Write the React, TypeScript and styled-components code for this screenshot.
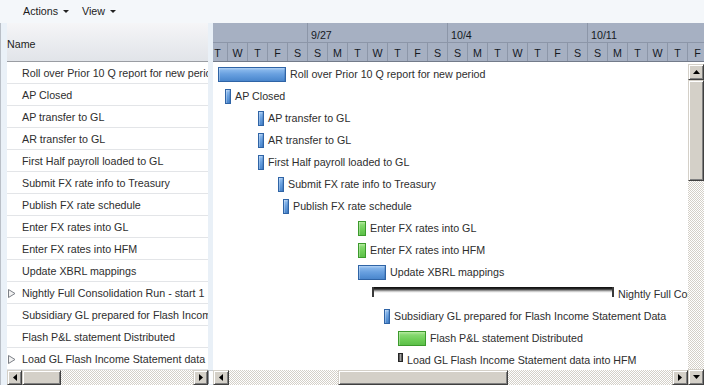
import React from 'react'
import styled, { createGlobalStyle, css } from 'styled-components'

const GlobalStyle = createGlobalStyle`
  html, body {
    margin: 0;
    padding: 0;
  }
  body {
    font-family: 'Liberation Sans', Arial, sans-serif;
    font-size: 10.7px;
    color: #2e2e2e;
  }
`

type Kind = 'blue' | 'green' | 'dark' | 'summary'

interface Task {
  name: string
  kind: Kind
  start: number
  end: number
  expandable?: boolean
}

// x positions of the bars on the page; the chart pane starts at CHART_X
const CHART_X = 213
const DAY_W = 20
const FIRST_DAY_X = 208

const tasks: Task[] = [
  { name: 'Roll over Prior 10 Q report for new period', kind: 'blue', start: 218, end: 286 },
  { name: 'AP Closed', kind: 'blue', start: 225, end: 231 },
  { name: 'AP transfer to GL', kind: 'blue', start: 258, end: 264 },
  { name: 'AR transfer to GL', kind: 'blue', start: 258, end: 264 },
  { name: 'First Half payroll loaded to GL', kind: 'blue', start: 258, end: 264 },
  { name: 'Submit FX rate info to Treasury', kind: 'blue', start: 278, end: 284 },
  { name: 'Publish FX rate schedule', kind: 'blue', start: 283, end: 289 },
  { name: 'Enter FX rates into GL', kind: 'green', start: 358, end: 366 },
  { name: 'Enter FX rates into HFM', kind: 'green', start: 358, end: 366 },
  { name: 'Update XBRL mappings', kind: 'blue', start: 358, end: 386 },
  { name: 'Nightly Full Consolidation Run - start 1', kind: 'summary', start: 372, end: 614, expandable: true },
  { name: 'Subsidiary GL prepared for Flash Income Statement Data', kind: 'blue', start: 384, end: 390 },
  { name: 'Flash P&L statement Distributed', kind: 'green', start: 398, end: 426 },
  { name: 'Load GL Flash Income Statement data into HFM', kind: 'dark', start: 398, end: 403, expandable: true },
]

const weeks = [
  { label: '', days: 5 },
  { label: '9/27', days: 7 },
  { label: '10/4', days: 7 },
  { label: '10/11', days: 7 },
]

const dayLetters = ['T', 'W', 'T', 'F', 'S', 'S', 'M', 'T', 'W', 'T', 'F', 'S', 'S', 'M', 'T', 'W', 'T', 'F', 'S', 'S', 'M', 'T', 'W', 'T', 'F']

const Page = styled.div`
  width: 704px;
  height: 385px;
  overflow: hidden;
  display: flex;
  flex-direction: column;
  background: #f4f7fa;
`

const Toolbar = styled.div`
  height: 23px;
  flex: none;
  display: flex;
  align-items: center;
  padding-left: 23px;
  color: #1c1c1c;
`

const MenuItem = styled.div`
  display: flex;
  align-items: center;
  gap: 5px;
  margin-right: 13px;
  padding-bottom: 1px;
`

const Main = styled.div`
  flex: 1;
  display: flex;
  min-height: 0;
  border-left: 1px solid #b9bfc7;
`

const Gutter = styled.div`
  width: 6px;
  flex: none;
  background: #eaf1f8;
`

const ListPane = styled.div`
  width: 201px;
  flex: none;
  display: flex;
  flex-direction: column;
`

const NameHeader = styled.div`
  height: 39px;
  flex: none;
  box-sizing: border-box;
  display: flex;
  align-items: center;
  padding: 4px 0 0 0;
  background: linear-gradient(to bottom, #f5f5f7, #e1e4e9);
  border-bottom: 1px solid #9a9da3;
  color: #1c1c1c;
`

const ListBody = styled.div`
  flex: 1;
  background: #fff;
  overflow: hidden;
`

const ListRow = styled.div`
  height: 22px;
  box-sizing: border-box;
  display: flex;
  align-items: center;
  padding: 1px 0 0 1px;
  border-bottom: 1px solid #e3e5e8;
  white-space: nowrap;
  overflow: hidden;
`

const ExpandSlot = styled.span`
  width: 14px;
  flex: none;
  display: flex;
  align-items: center;
`

const Splitter = styled.div`
  width: 5px;
  flex: none;
  display: flex;
  flex-direction: column;
  justify-content: flex-end;
  background: #e9f0f7;
`

const SplitterGrip = styled.div`
  height: 14px;
  margin: 0 0 1px 0;
  box-sizing: border-box;
  background: #fbfcfe;
  border-left: 1px solid #8d9298;
  border-top: 1px solid #c5cad0;
`

const ChartPane = styled.div`
  flex: 1;
  min-width: 0;
  display: flex;
  flex-direction: column;
`

const TimeHeader = styled.div`
  height: 39px;
  flex: none;
  overflow: hidden;
  background: #a6b0c2;
  color: #15191f;
`

const TimeRow = styled.div<{ $h: number; $edge: string }>`
  height: ${(p) => p.$h}px;
  box-sizing: border-box;
  display: flex;
  margin-left: ${FIRST_DAY_X - CHART_X}px;
  border-bottom: 1px solid ${(p) => p.$edge};
`

const WeekCell = styled.div<{ $days: number }>`
  width: ${(p) => p.$days * DAY_W}px;
  flex: none;
  box-sizing: border-box;
  border-right: 1px solid #8c96a8;
  padding: 6px 0 0 3px;
`

const DayCell = styled.div`
  width: ${DAY_W}px;
  flex: none;
  box-sizing: border-box;
  border-right: 1px solid #8c96a8;
  text-align: center;
  line-height: 18px;
  padding-top: 1px;
`

const ChartMain = styled.div`
  flex: 1;
  min-height: 0;
  display: flex;
`

const ChartColumn = styled.div`
  flex: 1;
  min-width: 0;
  display: flex;
  flex-direction: column;
`

const ChartBody = styled.div`
  flex: 1;
  background: #fff;
  overflow: hidden;
`

const ChartRow = styled.div`
  height: 22px;
  box-sizing: border-box;
  padding-top: 5px;
  display: flex;
  align-items: flex-start;
  white-space: nowrap;
`

const skins: Record<Kind, ReturnType<typeof css>> = {
  blue: css`
    height: 15px;
    border: 1px solid #2f64a6;
    background: linear-gradient(to bottom, #b2d2f5 0%, #84b4ea 18%, #6aa1e0 45%, #5b95d8 70%, #4a86cc 100%);
    box-shadow: inset 1px 0 rgba(255, 255, 255, 0.3), inset -1px 0 rgba(0, 40, 100, 0.15);
  `,
  green: css`
    height: 15px;
    border: 1px solid #3c9a2c;
    background: linear-gradient(to bottom, #b6eaa0 0%, #86d970 22%, #70cf59 55%, #5cbf48 100%);
    box-shadow: inset 1px 0 rgba(255, 255, 255, 0.3);
  `,
  dark: css`
    height: 9px;
    border: 1px solid #262626;
    background: linear-gradient(to right, #3e3e3e, #a3a3a3 50%, #3e3e3e);
  `,
  summary: css`
    position: relative;
    height: 10px;
    background: linear-gradient(
      to bottom,
      #0c0c0c 0,
      #2a2a2a 2px,
      #6e6e6e 3px,
      #b4b4b4 4px,
      #e6e6e6 5px,
      transparent 6px
    );
    &::before,
    &::after {
      content: '';
      position: absolute;
      top: 0;
      width: 2px;
      height: 10px;
      background: #3a3a3a;
    }
    &::before {
      left: 0;
    }
    &::after {
      right: 0;
    }
  `,
}

const Bar = styled.div<{ $kind: Kind }>`
  flex: none;
  box-sizing: border-box;
  ${(p) => skins[p.$kind]}
`

const BarLabel = styled.span`
  margin-left: 4px;
  line-height: 15px;
`

/* classic scrollbars */
const raised = css`
  box-sizing: border-box;
  background: #d4d0c8;
  border: 1px solid;
  border-color: #d4d0c8 #404040 #404040 #d4d0c8;
  box-shadow: inset 1px 1px #ffffff, inset -1px -1px #808080;
`

const ScrollButton = styled.div<{ $w: number; $h: number }>`
  ${raised};
  width: ${(p) => p.$w}px;
  height: ${(p) => p.$h}px;
  flex: none;
  display: flex;
  align-items: center;
  justify-content: center;
`

const Thumb = styled.div<{ $w?: number; $h?: number }>`
  ${raised};
  flex: none;
  width: ${(p) => (p.$w ? `${p.$w}px` : 'auto')};
  height: ${(p) => (p.$h ? `${p.$h}px` : 'auto')};
`

const Track = styled.div<{ $size?: number }>`
  flex: ${(p) => (p.$size ? `0 0 ${p.$size}px` : '1')};
  background: repeating-conic-gradient(#d4d0c8 0 25%, #ffffff 0 50%) 0 0 / 2px 2px;
`

const HScroll = styled.div`
  height: 15px;
  flex: none;
  display: flex;
`

const VScroll = styled.div`
  width: 16px;
  flex: none;
  display: flex;
  flex-direction: column;
  padding-top: 2px;
  background: #fff;
`

const Arrow = ({ dir }: { dir: 'up' | 'down' | 'left' | 'right' }) => {
  const pts = {
    up: '0,4 7,4 3.5,0',
    down: '0,0 7,0 3.5,4',
    left: '4,0 4,7 0,3.5',
    right: '0,0 0,7 4,3.5',
  }[dir]
  const vertical = dir === 'up' || dir === 'down'
  return (
    <svg width={vertical ? 7 : 4} height={vertical ? 4 : 7} viewBox={vertical ? '0 0 7 4' : '0 0 4 7'}>
      <polygon points={pts} fill="#000" />
    </svg>
  )
}

const Caret = () => (
  <svg width="6" height="3" viewBox="0 0 6 3">
    <polygon points="0,0 6,0 3,3" fill="#222" />
  </svg>
)

const ExpandIcon = () => (
  <svg width="8" height="9" viewBox="0 0 8 9">
    <polygon points="0.5,0.5 7,4.5 0.5,8.5" fill="#f2f2f2" stroke="#7b7f86" strokeWidth="1" />
  </svg>
)

export default function App() {
  return (
    <>
      <GlobalStyle />
      <Page>
        <Toolbar>
          <MenuItem>
            Actions <Caret />
          </MenuItem>
          <MenuItem>
            View <Caret />
          </MenuItem>
        </Toolbar>
        <Main>
          <Gutter />
          <ListPane>
            <NameHeader>Name</NameHeader>
            <ListBody>
              {tasks.map((t) => (
                <ListRow key={t.name}>
                  <ExpandSlot>{t.expandable && <ExpandIcon />}</ExpandSlot>
                  {t.name}
                </ListRow>
              ))}
            </ListBody>
            <HScroll>
              <ScrollButton $w={15} $h={15}>
                <Arrow dir="left" />
              </ScrollButton>
              <Thumb $w={39} />
              <Track />
              <ScrollButton $w={15} $h={15}>
                <Arrow dir="right" />
              </ScrollButton>
            </HScroll>
          </ListPane>
          <Splitter>
            <SplitterGrip />
          </Splitter>
          <ChartPane>
            <TimeHeader>
              <TimeRow $h={20} $edge="#8c96a8">
                {weeks.map((w, i) => (
                  <WeekCell key={i} $days={w.days}>
                    {w.label}
                  </WeekCell>
                ))}
              </TimeRow>
              <TimeRow $h={19} $edge="#737b8a">
                {dayLetters.map((d, i) => (
                  <DayCell key={i}>{d}</DayCell>
                ))}
              </TimeRow>
            </TimeHeader>
            <ChartMain>
              <ChartColumn>
                <ChartBody>
                  {tasks.map((t) => (
                    <ChartRow key={t.name}>
                      <Bar $kind={t.kind} style={{ marginLeft: t.start - CHART_X, width: t.end - t.start }} />
                      <BarLabel>{t.name}</BarLabel>
                    </ChartRow>
                  ))}
                </ChartBody>
                <HScroll>
                  <ScrollButton $w={16} $h={15}>
                    <Arrow dir="left" />
                  </ScrollButton>
                  <Track $size={109} />
                  <Thumb $w={170} />
                  <Track />
                  <ScrollButton $w={16} $h={15}>
                    <Arrow dir="right" />
                  </ScrollButton>
                </HScroll>
              </ChartColumn>
              <VScroll>
                <ScrollButton $w={16} $h={16}>
                  <Arrow dir="up" />
                </ScrollButton>
                <Thumb $h={101} />
                <Track />
                <ScrollButton $w={16} $h={16}>
                  <Arrow dir="down" />
                </ScrollButton>
              </VScroll>
            </ChartMain>
          </ChartPane>
        </Main>
      </Page>
    </>
  )
}
